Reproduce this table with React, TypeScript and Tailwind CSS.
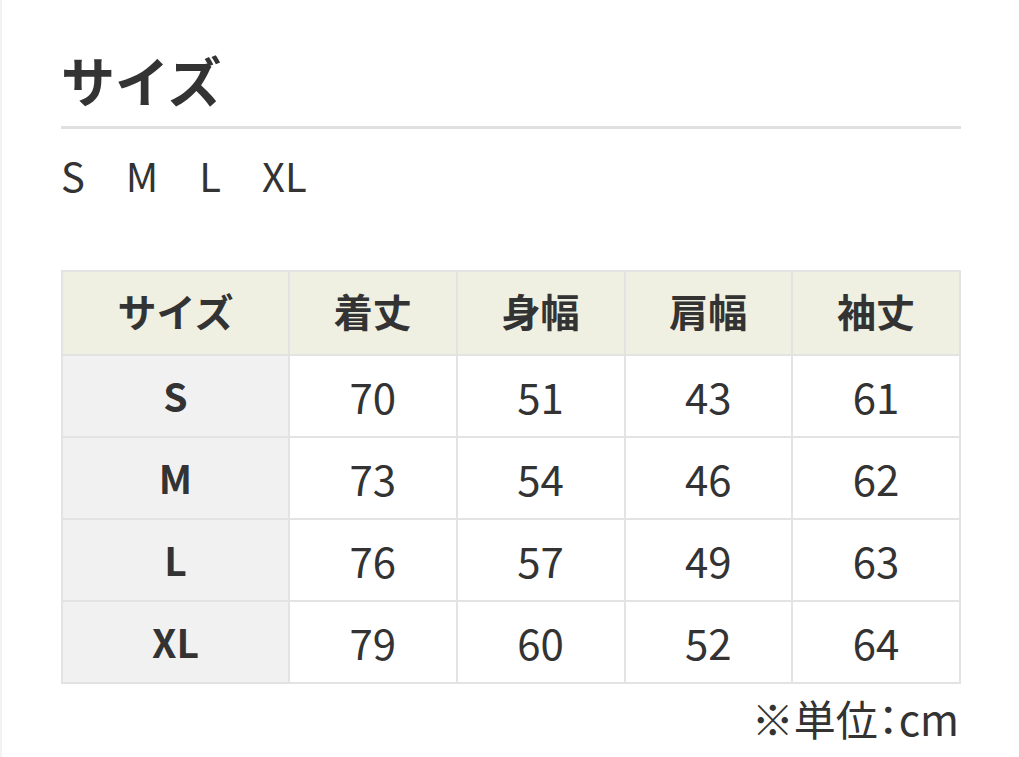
import React from "react";

const rows = [
  ["S", "70", "51", "43", "61"],
  ["M", "73", "54", "46", "62"],
  ["L", "76", "57", "49", "63"],
  ["XL", "79", "60", "52", "64"],
];

export default function App() {
  return (
    <div
      className="w-[1019px] h-[757px] bg-white border-l-2 border-[#f3f3f3] text-[#333333] overflow-hidden"
      style={{ fontFamily: '"Noto Sans CJK JP", "Noto Sans", sans-serif' }}
    >
      <div className="ml-[59px] w-[900px]">
        <h2 className="pt-[42px] text-[54px] font-bold leading-[76px]">サイズ</h2>
        <div className="mt-[8px] h-[3px] bg-[#e0e0e0]" />
        <div className="mt-[18px] flex gap-[41px] text-[40px] leading-[56px]">
          <span>S</span>
          <span>M</span>
          <span>L</span>
          <span>XL</span>
        </div>
        <table className="mt-[67px] w-[900px] border-collapse border-2 border-[#e3e3e3] table-fixed">
          <colgroup>
            <col className="w-[227px]" />
            <col />
            <col />
            <col />
            <col />
          </colgroup>
          <thead>
            <tr className="h-[84px] bg-[#efefe2]">
              {["サイズ", "着丈", "身幅", "肩幅", "袖丈"].map((h) => (
                <th key={h} className="border-2 border-[#e3e3e3] text-[39px] font-bold text-center pb-[5px]">
                  {h}
                </th>
              ))}
            </tr>
          </thead>
          <tbody>
            {rows.map((r) => (
              <tr key={r[0]} className="h-[82px]">
                {r.map((c, i) => (
                  <td
                    key={i}
                    className={
                      i === 0
                        ? "border-2 border-[#e3e3e3] bg-[#f1f1f1] text-center text-[39px] font-bold pb-[2px]"
                        : "border-2 border-[#e3e3e3] bg-white text-center text-[42px] pb-[2px]"
                    }
                  >
                    {c}
                  </td>
                ))}
              </tr>
            ))}
          </tbody>
        </table>
        <div
          className="mt-[6px] text-right text-[42px] leading-[56px] pr-[2px]"
          style={{ fontFeatureSettings: '"palt"' }}
        >
          ※単位：cm
        </div>
      </div>
    </div>
  );
}
